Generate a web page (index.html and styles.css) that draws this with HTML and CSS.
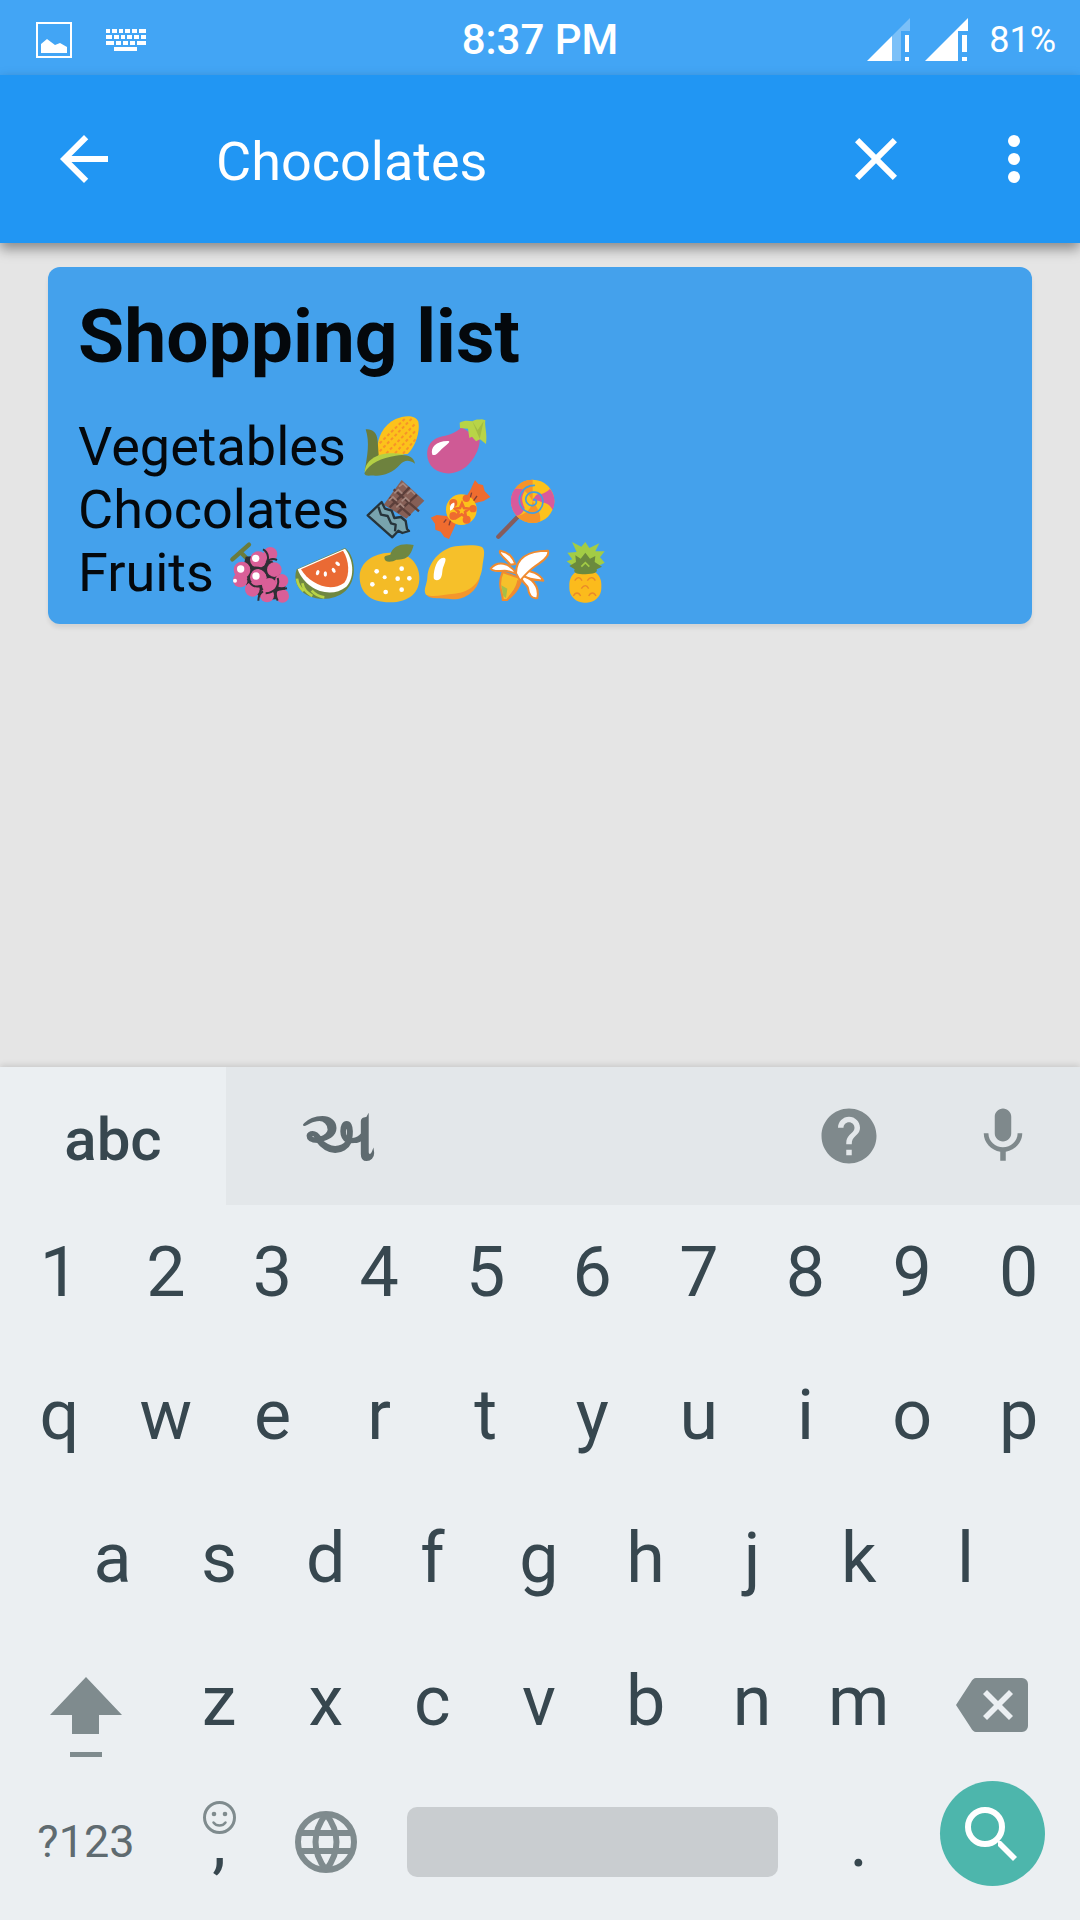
FILE: index.html
```
<!DOCTYPE html>
<html lang="en">
<head>
<meta charset="utf-8">
<meta name="viewport" content="width=device-width, initial-scale=1">
<title>Search notes</title>
<link rel="stylesheet" href="styles.css">
</head>
<body>

<div class="statusbar">
  <div class="status-side left">
    <svg class="status-image" viewBox="0 0 36 36"><path fill="none" stroke="#fff" stroke-width="2" d="M1 1h34v34H1z"/><path fill="#fff" d="M5 31v-9l6-5 8 6 5-2 7 4v6z"/></svg>
    <svg class="status-keys" viewBox="0 0 40 22" fill="#fff"><path d="M0 0h4v4H0zM6 0h5v4H6zM13 0h4v4h-4zM19 0h5v4h-5zM26 0h5v4h-5zM33 0h7v4h-7zM0 6h6v4H0zM8 6h5v4H8zM15 6h4v4h-4zM21 6h5v4h-5zM28 6h5v4h-5zM35 6h5v4h-5zM0 12h8v4H0zM10 12h5v4h-5zM17 12h5v4h-5zM24 12h5v4h-5zM31 12h9v4h-9zM8 18h23v4H8z"/></svg>
  </div>
  <span class="clock">8:37 PM</span>
  <div class="status-side right">
    <svg class="signal" viewBox="0 0 43 43" fill="#fff"><path opacity=".3" d="M43 0v13H34v30h-9V18z"/><path d="M0 43l25-25v25zM38 17h4v17h-4zM38 39h4v4h-4z"/></svg>
    <svg class="signal" viewBox="0 0 43 43" fill="#fff"><path d="M0 43L43 0v13H33v30zM37 17h5v17h-5zM37 39h5v4h-5z"/></svg>
    <span class="battery">81%</span>
  </div>
</div>

<header class="appbar">
  <button class="icon-btn" aria-label="Back"><svg viewBox="0 0 24 24"><path d="M20 11H7.83l5.59-5.59L12 4l-8 8 8 8 1.41-1.41L7.83 13H20v-2z"/></svg></button>
  <input class="query" type="text" value="Chocolates" aria-label="Search">
  <button class="icon-btn" aria-label="Clear"><svg viewBox="0 0 24 24"><path d="M19 6.41L17.59 5 12 10.59 6.41 5 5 6.41 10.59 12 5 17.59 6.41 19 12 13.41 17.59 19 19 17.59 13.41 12z"/></svg></button>
  <button class="icon-btn" aria-label="More"><svg viewBox="0 0 24 24"><circle cx="12" cy="6" r="2"/><circle cx="12" cy="12" r="2"/><circle cx="12" cy="18" r="2"/></svg></button>
</header>

<main class="notes">
  <article class="note">
    <h2>Shopping list</h2>
    <p>Vegetables
      <span class="emojis"><!-- corn -->
        <svg viewBox="0 15 195 186" role="img" aria-label="corn"><path fill="#fcc21b" d="M56 138C50 95 66 48 110 27c28-13 60-12 68 8 6 32-10 76-32 97z"/><path fill="none" stroke="#f79329" stroke-width="6" stroke-dasharray="9 7" d="M62 100l76-74M62 124L160 24M82 130l88-90M108 130l62-68M132 131l40-46"/><path fill="#6b7c3c" d="M20 58c18-2 34 8 36 34l3 44-42 48c8-48 16-86 3-126z"/><path fill="#b4cf45" d="M17 186c2-42 50-66 118-53l-40 30z"/><path fill="#6e823e" d="M16 190c16-33 52-45 94-53 34-6 55 4 58 24-20-14-32-10-44 2-22 27-56 36-76 34-14-2-28 5-32-7z"/></svg><!-- eggplant -->
        <svg viewBox="195 15 195 186" role="img" aria-label="eggplant"><path fill="#cf5a95" d="M308 52c-20 20-44 24-65 29-44 10-50 66-20 94 30 24 76 20 106-12 26-28 34-58 33-75z"/><path fill="#b8d447" d="M302 38c14-8 26-6 38-4 8-6 18-5 29-6l10 3c-3 20 7 40 2 71l-18-14-12 6-12-14-8 4-4-28-24-2z"/><path fill="#8fa63b" d="M340 34l16 26 18-26-12 52z" opacity=".5"/><path fill="#fff" d="M220 134c-7-22 12-42 48-41 8 0-2 10-12 17-14 10-24 30-36 24z"/></svg>
      </span><br>
      Chocolates
      <span class="emojis"><!-- chocolate -->
        <svg viewBox="8 204 195 186" role="img" aria-label="chocolate"><path fill="#865f56" d="M124 210l68 62-54 54-68-42z"/><path fill="none" stroke="#5c3f3a" stroke-width="7" stroke-linejoin="round" d="M100 238l76 66M88 262l62 54M148 232l-60 60M170 254l-58 54"/><path fill="none" stroke="#a5867d" stroke-width="5" d="M116 230l12-10 12 12M140 252l12-11 12 12M102 250l12-11 12 12M124 274l12-11 12 12M86 272l12-11 12 12M108 292l12-11 12 12"/><path fill="#78a3ad" stroke="#26343b" stroke-width="7" stroke-linejoin="round" d="M64 276l10 20 20 6 8 22 20-3 14 12 4 24 6 6-20 6-12-7-18 20-74-66z"/><path fill="none" stroke="#26343b" stroke-width="7" stroke-linejoin="round" d="M54 290l8 24 20 4 10 22 14 4-2 20"/></svg><!-- candy -->
        <svg viewBox="203 204 195 186" role="img" aria-label="candy"><path fill="#ef6c2f" d="M318 260l12-20 14-30 10 12 14 3 5 18 17 18-20 12-34 8zM290 334l-10 22-14 31-14-6-11-16-16-6-1-18-13-18 18-8 30 3z"/><circle cx="303" cy="299" r="46" fill="#fcc21b"/><g fill="#ef6c2f"><circle cx="318" cy="265" r="11"/><circle cx="279" cy="279" r="12"/><circle cx="279" cy="318" r="12"/><circle cx="319" cy="329" r="12"/><circle cx="338" cy="296" r="11"/></g><path fill="#fcc21b" stroke="#ef6c2f" stroke-width="8" d="M305 280l6 14 15 2-12 10 3 15-13-8-13 8 4-15-11-10 15-2z"/><path fill="#fff" d="M270 302c-4-12 2-24 12-24 2 10-2 20-12 24z"/><path fill="none" stroke="#823f35" stroke-width="4" d="M330 262l4-14M340 272l10-14M258 328l-8 10M270 332l-4 14"/></svg><!-- lollipop -->
        <svg viewBox="398 204 195 186" role="img" aria-label="lollipop"><path stroke="#865c5c" stroke-width="13" stroke-linecap="round" d="M414 380l57-58"/><circle cx="517" cy="274" r="65" fill="#fcc21b"/><path fill="#f79329" d="M517 209a65 65 0 0 0-54 28c20-8 40 10 54 37zM517 339a65 65 0 0 0 22-4c4-20-6-40-22-61-4 26-24 40-48 44a65 65 0 0 0 48 21z"/><path fill="#d95a9b" d="M463 237a65 65 0 0 0 6 81c14-4 20-12 24-24-10-20-10-34 0-52-8-6-18-8-30-5zM517 274c4-14 14-26 26-22 14-4 24-14 26-16a65 65 0 0 1 8 64c-8-16-18-22-30-22-12-8-20-8-30-4z"/><path fill="none" stroke="#459fe0" stroke-width="5" stroke-linecap="round" d="M520 268c10 0 12 14 0 18-16 4-28-12-22-26 10-20 40-18 48 4 8 28-14 50-40 44-26-8-36-34-24-58 8-16 24-24 40-24"/></svg>
      </span><br>
      Fruits
      <span class="emojis"><!-- grapes -->
        <svg viewBox="4 15 195 186" role="img" aria-label="grapes"><path fill="none" stroke="#6b7c3c" stroke-width="13" stroke-linecap="round" d="M20 70l50-44M44 48l24 24"/><path fill="#2f2f35" d="M60 62l70-6 50 90-6 42-60 4-70-60z"/><g fill="#d95f98"><circle cx="134" cy="54" r="21"/><circle cx="44" cy="132" r="22"/><circle cx="80" cy="160" r="22"/><circle cx="146" cy="101" r="22"/><circle cx="168" cy="134" r="20"/><circle cx="124" cy="178" r="21"/><circle cx="170" cy="180" r="20"/><circle cx="131" cy="148" r="22"/><circle cx="98" cy="71" r="25"/><circle cx="49" cy="102" r="25"/><circle cx="98" cy="124" r="25"/></g><path fill="none" stroke="#2f2f35" stroke-width="6" d="M112 40c16 8 20 30 8 48M74 96c26-6 46 4 52 24M156 126c8 28-12 44-36 46M154 160c-6 10-4 22 2 34M154 162l30-5M112 166c-10 6-14 16-14 28M122 80c8-10 20-14 32-8M66 128c10 24 22 26 42 22"/><g fill="#fff"><circle cx="90" cy="67" r="11"/><circle cx="45" cy="99" r="11"/><circle cx="91" cy="120" r="11"/><circle cx="28" cy="134" r="6"/></g></svg><!-- watermelon -->
        <svg viewBox="199 15 195 186" role="img" aria-label="watermelon"><path fill="#6f8741" d="M358 36c32 22 38 96 2 128-42 38-114 28-138-6-14-18-16-38-9-58z"/><path fill="none" stroke="#b8d447" stroke-width="8" d="M214 128c2 18 10 29 20 38M230 142c4 20 14 28 30 38M258 164c12 14 22 18 38 20"/><path fill="#fff" d="M358 38c24 30 32 82 4 114-46 38-122 12-146-52z"/><path fill="#ea6a34" d="M352 44c18 28 22 72 4 96-44 32-106 2-130-40z"/><g fill="#fff"><ellipse cx="276" cy="110" rx="5" ry="8" transform="rotate(20 276 110)"/><ellipse cx="299" cy="114" rx="5" ry="8"/><ellipse cx="324" cy="103" rx="5" ry="8" transform="rotate(-30 324 103)"/><ellipse cx="336" cy="83" rx="5" ry="8" transform="rotate(-50 336 83)"/></g></svg><!-- tangerine -->
        <svg viewBox="394 15 195 186" role="img" aria-label="tangerine"><path fill="#f4bb26" d="M492 50c56-4 88 32 89 72 2 48-30 76-88 77-62 0-92-32-91-79 2-42 40-68 90-70z"/><path fill="#6f8741" d="M476 66c0-8 10-8 18-10 6-28 38-36 70-29-6 22-14 46-52 44-10 6-34 12-36-5z"/><g fill="#fff"><circle cx="453" cy="106" r="7"/><circle cx="528" cy="98" r="7"/><circle cx="477" cy="124" r="6"/><circle cx="516" cy="128" r="7"/><circle cx="551" cy="127" r="7"/><circle cx="440" cy="145" r="7"/><circle cx="480" cy="168" r="7"/><circle cx="528" cy="161" r="7"/></g></svg><!-- lemon -->
        <svg viewBox="4 15 195 186" role="img" aria-label="lemon"><path fill="#f4962c" d="M14 170c8 24 50 14 80 20 40 2 76-24 84-66z"/><path fill="#f6c02a" d="M16 176c-10-14 4-32 4-52 4-54 50-92 92-94 24-1 46-5 72 3 12 10 4 34 1 60-4 44-34 76-84 80-30 2-64 12-85 3z"/><path fill="#fff" d="M39 124c0-26 10-58 30-59 12 0 2 18-2 30-4 14 0 36-18 38-6 0-10-2-10-9z"/></svg><!-- banana -->
        <svg viewBox="199 15 195 186" role="img" aria-label="banana"><g fill="#fff" stroke="#f08b30" stroke-width="6" stroke-linejoin="round"><path d="M284 84c-8-20-18-34-45-40-8 8 18 26 30 42z"/><path fill="#f6c02a" d="M246 108l56 20c-10 30-28 42-42 64h-14c2-20-18-42 0-84z"/><path d="M310 104c20 0 46 8 58 30-26-2-48-4-62-16z"/><path d="M302 120c30 4 56 30 48 66-18 4-26-12-28-30-2-12-22-16-20-36z"/><path d="M298 134l-12-22c0-40 28-68 96-68 6 16-16 32-38 46-20 14-30 26-46 44z"/><path d="M286 112c-20-34-56-38-76-14 10 12 26 6 42 6 12 0 20 6 34 8z"/></g><path fill="#f08b30" d="M290 132c-4 24-18 40-32 58l10-2c18-14 30-34 36-52z"/><path fill="#a5bf48" d="M242 148l18 10-4 28-8-6z"/></svg><!-- pineapple -->
        <svg viewBox="394 15 195 186" role="img" aria-label="pineapple"><rect x="446" y="100" width="96" height="100" rx="44" fill="#fbbb1c"/><path fill="#a3cc45" d="M454 18l28 14 12-14 12 18 30-14-12 24 28 0-14 18 14 16-30 16h-58l-26-20 17-6-15-20 28-2z"/><path fill="#6b8a3d" d="M446 90l20-12-2-20 16 10 14-18 14 18 16-8-2 18 22 14-16 8c4 10-10 14-34 15-24 0-38-4-32-15z"/><path fill="none" stroke="#a3cc45" stroke-width="5" d="M482 92l12-12 12 12"/><path fill="none" stroke="#e98a2a" stroke-width="4" d="M462 134c8-12 16-12 22 0M500 134c8-12 18-12 24 0M482 158c8-12 16-12 22 0M458 180c6-12 16-12 22 0M504 180c6-12 16-12 22 0"/></svg>
      </span>
    </p>
  </article>
</main>

<div class="keyboard">
  <div class="kb-bar">
    <button class="kb-tab active">abc</button>
    <button class="kb-tab gujarati" lang="gu">અ</button>
    <button class="kb-tool help" aria-label="Help"><svg viewBox="0 0 24 24"><path d="M12 2C6.48 2 2 6.48 2 12s4.48 10 10 10 10-4.48 10-10S17.52 2 12 2zm1 17h-2v-2h2v2zm2.07-7.75l-.9.92C13.45 12.9 13 13.5 13 15h-2v-.5c0-1.1.45-2.1 1.17-2.83l1.24-1.26c.37-.36.59-.86.59-1.41 0-1.1-.9-2-2-2s-2 .9-2 2H8c0-2.21 1.79-4 4-4s4 1.79 4 4c0 .88-.36 1.68-.93 2.25z"/></svg></button>
    <button class="kb-tool" aria-label="Voice input"><svg viewBox="0 0 24 24"><path d="M12 14c1.66 0 2.99-1.34 2.99-3L15 5c0-1.66-1.34-3-3-3S9 3.34 9 5v6c0 1.66 1.34 3 3 3zm5.3-3c0 3-2.54 5.1-5.3 5.1S6.7 14 6.7 11H5c0 3.41 2.72 6.23 6 6.72V21h2v-3.28c3.28-.48 6-3.3 6-6.72h-1.7z"/></svg></button>
  </div>
  <div class="keys">
    <div class="row">
      <button>1</button><button>2</button><button>3</button><button>4</button><button>5</button><button>6</button><button>7</button><button>8</button><button>9</button><button>0</button>
    </div>
    <div class="row">
      <button>q</button><button>w</button><button>e</button><button>r</button><button>t</button><button>y</button><button>u</button><button>i</button><button>o</button><button>p</button>
    </div>
    <div class="row middle">
      <button>a</button><button>s</button><button>d</button><button>f</button><button>g</button><button>h</button><button>j</button><button>k</button><button>l</button>
    </div>
    <div class="row">
      <button class="wide" aria-label="Shift"><svg class="shift" viewBox="0 0 72 82"><path d="M36 0l36 38H49v19H22V38H0zM20 75h32v5H20z"/></svg></button>
      <button>z</button><button>x</button><button>c</button><button>v</button><button>b</button><button>n</button><button>m</button>
      <button class="wide" aria-label="Backspace"><svg class="backspace" viewBox="0 0 72 54"><path fill-rule="evenodd" d="M20 0h46a6 6 0 0 1 6 6v42a6 6 0 0 1-6 6H20c-2 0-4-2-5-4L0 27 15 4c1-2 3-4 5-4zM27 16l11 11-11 11 4 4 11-11 11 11 4-4-11-11 11-11-4-4-11 11-11-11z"/></svg></button>
    </div>
    <div class="row bottom">
      <button class="wide symbols">?123</button>
      <button class="comma"><svg class="smiley" viewBox="0 0 33 33"><circle cx="16.5" cy="16.5" r="15" fill="none" stroke="#7f8b8e" stroke-width="3"/><circle cx="11" cy="13" r="2.3"/><circle cx="22" cy="13" r="2.3"/><path fill="none" stroke="#7f8b8e" stroke-width="2.5" stroke-linecap="round" d="M10.5 21.5c3 4 9 4 12 0"/></svg>,</button>
      <button aria-label="Language"><svg class="globe" viewBox="0 0 62 62" fill="none" stroke="#7f8b8e" stroke-width="6"><circle cx="31" cy="31" r="28"/><path d="M5 22h52M5 40h52M31 3c-14 18-14 38 0 56M31 3c14 18 14 38 0 56"/></svg></button>
      <button class="space" aria-label="Space"></button>
      <button>.</button>
      <button class="wide" aria-label="Search"><span class="go"><svg viewBox="0 0 54 54"><circle cx="20" cy="20" r="17" fill="none" stroke="#fff" stroke-width="6"/><path d="M33 34l3 0 16 16-4 4-15-15z" fill="#fff"/></svg></span></button>
    </div>
  </div>
</div>

</body>
</html>
```
FILE: styles.css
```
* {
  box-sizing: border-box;
}

body {
  margin: 0;
  min-height: 100vh;
  display: flex;
  flex-direction: column;
  background-color: #e5e5e5;
  font-family: Roboto, "Noto Sans", sans-serif;
}

button {
  background: none;
  border: none;
  padding: 0;
  margin: 0;
  font: inherit;
  color: inherit;
  cursor: pointer;
}

svg {
  display: block;
}

/* Status bar */
.statusbar {
  display: flex;
  align-items: center;
  height: 75px;
  padding: 4px 24px 0;
  background-color: #42a5f5;
  color: #ffffff;
}

.status-side {
  display: flex;
  flex: 1;
  align-items: center;
}

.status-side.left {
  gap: 34px;
}

.status-side.right {
  justify-content: flex-end;
  gap: 15px;
}

.status-image {
  width: 36px;
  height: 36px;
  margin-left: 12px;
}

.status-keys {
  width: 40px;
  height: 22px;
}

.signal {
  width: 43px;
  height: 43px;
}

.clock {
  font-size: 42px;
  font-weight: 500;
}

.battery {
  margin-left: 6px;
  font-size: 36px;
}

/* Search bar */
.appbar {
  display: flex;
  align-items: center;
  gap: 66px;
  height: 168px;
  padding: 0 30px 0 48px;
  background-color: #2196f3;
  box-shadow: 0 6px 12px rgba(0, 0, 0, 0.4);
}

.icon-btn {
  width: 72px;
  height: 72px;
  fill: #ffffff;
}

.query {
  flex: 1;
  min-width: 0;
  padding: 4px 0 0;
  margin-left: 30px;
  border: none;
  outline: none;
  background: none;
  color: #ffffff;
  font: inherit;
  font-size: 54px;
}

/* Note card */
.notes {
  flex: 1;
  padding: 24px 48px;
}

.note {
  padding: 25px 30px 20px;
  border-radius: 12px;
  background-color: #44a1ec;
  box-shadow: 0 4px 4px rgba(0, 0, 0, 0.08);
  color: #04080c;
}

.note h2 {
  margin: 0 0 35px;
  font-size: 75px;
  line-height: 88px;
}

.note p {
  margin: 0;
  font-size: 54px;
  line-height: 63px;
}

.emojis {
  display: inline-flex;
  height: 62px;
  vertical-align: -12px;
}

.emojis svg {
  width: 65px;
  height: 62px;
}

/* Keyboard */
.keyboard {
  background-color: #ebeff2;
  box-shadow: 0 -2px 6px rgba(0, 0, 0, 0.12);
  color: #37474f;
}

.kb-bar {
  display: flex;
  height: 138px;
  background-color: #e3e7ea;
}

.kb-tab {
  width: 226px;
  padding-top: 6px;
  color: #5f6b70;
  font-size: 60px;
}

.kb-tab.active {
  background-color: #ebeff2;
  color: #37474f;
  font-weight: 500;
}

.kb-tab.gujarati {
  padding: 0;
  font-size: 70px;
  font-weight: 700;
}

.kb-tool {
  display: flex;
  align-items: center;
  justify-content: center;
  width: 154px;
  fill: #7f898c;
}

.kb-tool.help {
  margin-left: auto;
}

.kb-tool svg {
  width: 66px;
  height: 66px;
}

.keys {
  padding: 0 8px 0 6px;
}

.row {
  display: grid;
  grid-template-columns: repeat(20, 1fr);
  height: 143px;
  padding-bottom: 10px;
}

.row.bottom {
  padding-bottom: 14px;
}

.row button {
  display: flex;
  grid-column: span 2;
  align-items: center;
  justify-content: center;
  min-width: 0;
  font-size: 70px;
  line-height: 82px;
  fill: #7f8b8e;
}

/* Half a key in from the left */
.row.middle button:first-child {
  grid-column: 2 / span 2;
}

.row button.wide {
  grid-column: span 3;
}

.row button.symbols {
  color: #5f6b70;
  font-size: 45px;
}

.row button.space {
  grid-column: span 8;
  align-self: center;
  height: 70px;
  margin: 0 28px;
  border-radius: 10px;
  background-color: #c9cdd0;
}

.row button.comma {
  position: relative;
}

/* Long-press hint over the comma */
.smiley {
  position: absolute;
  top: 24px;
  width: 33px;
  height: 33px;
}

.shift {
  width: 72px;
  height: 82px;
  margin-top: 34px;
}

.backspace {
  width: 72px;
  height: 54px;
  margin-top: 8px;
}

.globe {
  width: 62px;
  height: 62px;
}

.go {
  display: flex;
  align-items: center;
  justify-content: center;
  width: 105px;
  height: 105px;
  margin-bottom: 16px;
  border-radius: 50%;
  background-color: #4db6ac;
}

.go svg {
  width: 54px;
  height: 54px;
}
```
